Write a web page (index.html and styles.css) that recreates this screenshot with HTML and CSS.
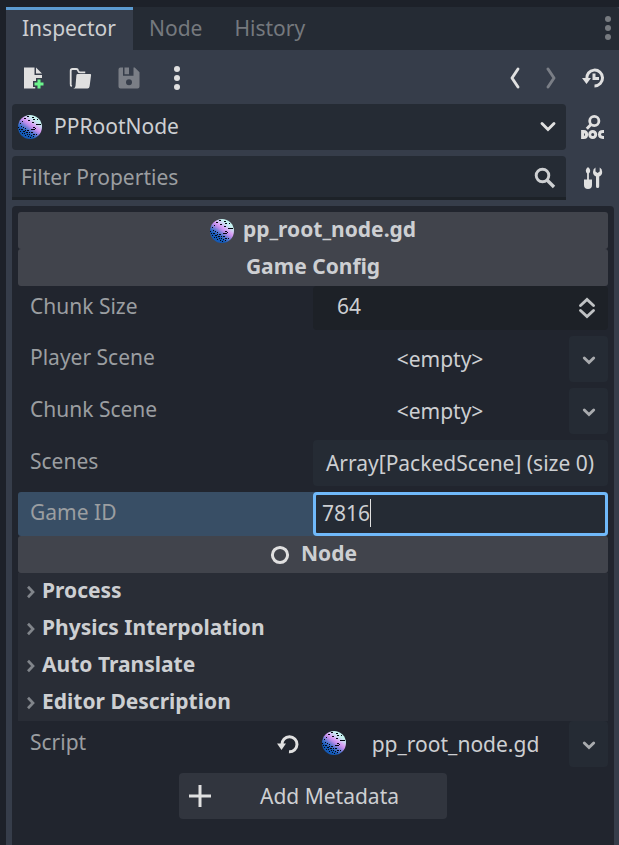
FILE: index.html
```html
<!DOCTYPE html>
<html lang="en">
<head>
<meta charset="utf-8">
<title>Inspector</title>
<link rel="stylesheet" href="styles.css">
</head>
<body>
<svg class="defs" width="0" height="0">
  <defs>
    <linearGradient id="ball" x1="0.8" y1="0.1" x2="0.25" y2="0.85">
      <stop offset="0.14" stop-color="#c4f0ee"/>
      <stop offset="0.3" stop-color="#d2c0f4"/>
      <stop offset="0.4" stop-color="#d89cf4"/>
      <stop offset="0.52" stop-color="#b58ae8"/>
      <stop offset="0.7" stop-color="#4c74cc"/>
      <stop offset="0.86" stop-color="#1459b4"/>
    </linearGradient>
    <symbol id="planet" viewBox="0 0 24 24">
      <circle cx="12" cy="12" r="12" fill="url(#ball)"/>
      <path fill="none" stroke="#05070f" d="M9 1.500h2M6 3.500h2M14 2.500h2M10 5.500h2M15 4.500h2M19 4.500h1M4 6.500h1M14 7.500h2M18 9.500h5M15 12.500h2M13 14.500h4M17 13.500h1M2 8.500h1M0 12.500h1M3 11.500h1M1 14.500h1M5 12.500h1M3 14.500h2M7 13.500h1M9 15.500h2M5 16.500h2M2 16.500h1M7 15.500h1M4 18.500h1M6 18.500h1M8 17.500h2M11 17.500h1M13 17.500h2M7 20.500h1M9 19.500h1M11 19.500h1M13 20.500h1M15 19.500h2M10 21.500h1M12 22.500h1M15 21.500h1M18 19.500h1"/>
    </symbol>
    <symbol id="chev" viewBox="0 0 14 12">
      <path d="M2.300 4 7 8.500 11.700 4" fill="none" stroke="currentColor" stroke-width="2.900" stroke-linecap="round"/>
    </symbol>
    <symbol id="fold" viewBox="0 0 10 14">
      <path d="M2 1.800 7 7 2 12.200" fill="none" stroke="#81858b" stroke-width="2.700"/>
    </symbol>
  </defs>
</svg>
<main class="dock">
  <nav class="tabs">
    <span class="tab active">Inspector</span>
    <span class="tab">Node</span>
    <span class="tab">History</span>
    <svg class="tab-menu" width="8" height="26" fill="#777b80"><circle cx="4" cy="4" r="3"/><circle cx="4" cy="13" r="3"/><circle cx="4" cy="22" r="3"/></svg>
  </nav>
  <div class="toolbar">
    <svg class="ico" viewBox="0 0 16 16"><path fill="#e0e0e0" d="M2 1v14h7.500v-1H8v-4h2V8h4V6H9V1zm8 0v4h4z"/><path fill="#6bf58c" d="M11 9v2H9v2h2v2h2v-2h2v-2h-2V9z"/></svg>
    <svg class="ico folder" viewBox="0 0 16 16"><path d="M2.600 13.500A1.300 1.300 0 0 1 1.800 12V3.200Q1.800 2 3 2h2.500Q6.500 2 6.700 3 7 4.300 8 4.300h3.500" fill="none" stroke="#e0e0e0" stroke-width="1.200"/><path fill="#e0e0e0" d="M6.500 5.300h8.300q.7 0 .6.700l-1 7.500Q14.200 15 13 15H3.500q1.300-.3 1.500-1.700l.6-7.200q.1-.8.900-.8z"/></svg>
    <svg class="ico dim" viewBox="0 0 16 16"><path fill="#e0e0e0" fill-rule="evenodd" d="M2.300 1H4v5.500h7V1h.8L15 4.200v9.500q0 1.300-1.300 1.300H2.300Q1 15 1 13.700V2.300Q1 1 2.300 1zM8 8.800a2 2 0 1 0 0 4 2 2 0 0 0 0-4zM5 1h3v4.500H5z"/></svg>
    <svg class="ico" viewBox="0 0 24 24" fill="#e0e0e0"><circle cx="12" cy="3" r="3"/><circle cx="12" cy="12" r="3"/><circle cx="12" cy="21" r="3"/></svg>
    <span class="spring"></span>
    <svg class="ico back" viewBox="0 0 24 24"><path d="M16 3 10 12l6 9" fill="none" stroke="#e0e0e0" stroke-width="2.900" stroke-linecap="round" stroke-linejoin="round"/></svg>
    <svg class="ico fwd dim" viewBox="0 0 24 24"><path d="m10 3 6 9-6 9" fill="none" stroke="#e0e0e0" stroke-width="2.900" stroke-linecap="round" stroke-linejoin="round"/></svg>
    <svg class="ico" viewBox="0 0 24 24"><path d="M4.800 13A7.900 7.900 0 1 1 12.500 19.900" fill="none" stroke="#e0e0e0" stroke-width="3"/><path fill="#e0e0e0" d="M0 12h9l-4.500 6zM10.500 7.500h3V11h3.500v3h-6.500z"/></svg>
  </div>
  <div class="line object">
    <div class="field select"><svg class="planet"><use href="#planet"/></svg><span>PPRootNode</span><svg class="drop" viewBox="0 0 18 12"><path d="m3 2.500 6 6 6-6" fill="none" stroke="#e0e0e0" stroke-width="2.900" stroke-linecap="round"/></svg></div>
    <svg class="ico side" viewBox="0 0 24 24"><circle cx="13.300" cy="6" r="4.600" fill="none" stroke="#e0e0e0" stroke-width="2.800"/><path d="m10 9.500-4.200 4.200" stroke="#e0e0e0" stroke-width="3"/><g fill="none" stroke="#e0e0e0" stroke-width="3"><path d="M1.600 16.500h1q3 0 3 3t-3 3h-1zM23 16.600h-1q-3.500 0-3.500 2.900t3.500 2.900h1"/><circle cx="11.700" cy="19.500" r="3"/></g></svg>
  </div>
  <div class="line">
    <div class="field search"><span>Filter Properties</span><svg class="ico" viewBox="0 0 24 24"><circle cx="9.500" cy="9.500" r="6.300" fill="none" stroke="#ced0d2" stroke-width="2.900"/><path d="m14 14 7 7" stroke="#ced0d2" stroke-width="3.300"/></svg></div>
    <svg class="ico side" viewBox="0 0 24 24" fill="#e0e0e0"><path d="M7 1q2.200 1.500 2.200 3.500T7.900 7.500v6H11V19a4 4 0 0 1-8 0v-5.500h3.100v-6Q4.800 6.500 4.800 4.500T7 1zM14.500 1.600q-2.500 1.200-2.500 4.300 0 3.200 3 4.600V20.500a1.600 1.600 0 0 0 3.200 0V10.500q3-1.400 3-4.600 0-3.100-2.500-4.300V5.500L16.600 7l-2.100-1.500z"/></svg>
  </div>
  <section class="props">
    <h2 class="head"><svg class="planet"><use href="#planet"/></svg>pp_root_node.gd</h2>
    <h2 class="head">Game Config</h2>
    <div class="row first"><label>Chunk Size</label><div class="value number"><span>64</span><svg width="18" height="22" viewBox="0 0 18 22"><path d="m2.500 8.500 6.500-6 6.500 6M2.500 13.500l6.500 6 6.500-6" fill="none" stroke="#c0c2c4" stroke-width="2.900" stroke-linecap="round"/></svg></div></div>
    <div class="row"><label>Player Scene</label><div class="value resource"><span>&lt;empty&gt;</span><button><svg><use href="#chev"/></svg></button></div></div>
    <div class="row"><label>Chunk Scene</label><div class="value resource"><span>&lt;empty&gt;</span><button><svg><use href="#chev"/></svg></button></div></div>
    <div class="row"><label>Scenes</label><div class="value array">Array[PackedScene] (size 0)</div></div>
    <div class="row chosen"><label>Game ID</label><div class="value edit">7816<i></i></div></div>
    <h2 class="head node"><svg width="20" height="20"><circle cx="10" cy="10" r="7.600" fill="none" stroke="#e0e0e0" stroke-width="3"/></svg>Node</h2>
    <div class="groups">
      <div><svg><use href="#fold"/></svg>Process</div>
      <div><svg><use href="#fold"/></svg>Physics Interpolation</div>
      <div><svg><use href="#fold"/></svg>Auto Translate</div>
      <div><svg><use href="#fold"/></svg>Editor Description</div>
    </div>
    <div class="row script"><label>Script</label><svg class="revert" viewBox="0 0 24 24"><path d="M6 12.500A7.500 7.500 0 1 1 13 19.700" fill="none" stroke="#e0e0e0" stroke-width="3"/><path fill="#e0e0e0" d="M1 11.500h9L5.500 18z"/></svg><div class="value resource"><svg class="planet"><use href="#planet"/></svg><span>pp_root_node.gd</span><button><svg><use href="#chev"/></svg></button></div></div>
    <div class="add"><svg class="ico" viewBox="0 0 24 24"><path d="M12 1v22M1 12h22" stroke="#e0e0e0" stroke-width="3"/></svg><span>Add Metadata</span></div>
  </section>
</main>
</body>
</html>
```
FILE: styles.css
```css
* { box-sizing: border-box; }
body {
  margin: 0;
  height: 845px;
  overflow: hidden;
  padding: 7px 0 0 6px;
  background: #1d2129;
  color: #cdcfd2;
  font: 21px/28px "Noto Sans", sans-serif;
}
svg { display: block; flex: none; }
.defs { position: absolute; }
.dock { height: 838px; background: #363d4a; display: flex; flex-direction: column; }
.tabs { height: 43px; flex: none; display: flex; background: #252b34; border-top-right-radius: 3px; padding-right: 7px; }
.tab { padding: 7px 16px 0; color: #75797e; }
.tab + .tab { padding-right: 16px; }
.tab.active { width: 127px; background: #363d4a; border-top: 3px solid #5c9bd1; padding-top: 4px; color: #cdcfd2; }
.tab-menu { margin: 8px 0 0 auto; }
.toolbar { height: 54px; flex: none; display: flex; align-items: center; gap: 24px; padding: 2px 13px 0 15px; }
.ico { width: 24px; height: 24px; }
.folder { margin: 0 1px 0 -1px; }
.dim { opacity: .4; }
.spring { flex: 1; }
.toolbar .fwd { margin-left: -12px; }
.toolbar .fwd + .ico { margin-left: -4px; }
.line { display: flex; flex: none; height: 44px; margin: 0 14px 0 6px; align-items: center; justify-content: space-between; }
.line.object { height: 46px; margin-bottom: 6px; }
.field { width: 554px; height: 100%; background: #252b34; border-radius: 4px; display: flex; align-items: center; }
.select { padding: 0 9px 0 6px; }
.select span { flex: 1; margin: 0 0 2px 12px; }
.planet { width: 24px; height: 24px; }
.drop { width: 18px; height: 12px; }
.search { padding: 0 9px 0 9px; border-radius: 4px 4px 0 0; border-bottom: 3px solid #1d2228; color: #9b9ea1; justify-content: space-between; }
.search .ico { position: relative; top: 1px; }
.props { width: 602px; margin: 6px 0 0 6px; height: 639px; flex: none; padding: 6px; background: #21252e; border-radius: 4px 4px 0 0; }
.head { height: 37px; margin: 0; font-size: 21px; line-height: 28px; font-weight: 700; display: flex; align-items: center; justify-content: center; gap: 9px; background: #41444c; border-radius: 3px; padding-bottom: 4px; }
.head.node { gap: 11px; padding-left: 1px; }
.head .planet, .head.node svg { position: relative; top: 2px; }
.row { height: 46px; margin-bottom: 6px; display: flex; color: #9b9ea1; }
.row label { width: 295px; padding: 7px 0 0 12px; }
.row.first { height: 44px; }
.row.first label, .row.chosen label { padding-top: 6px; }
.value { flex: 1; color: #cdcfd2; display: flex; align-items: center; border-radius: 4px; }
.number { background: #1d2127; padding: 0 12px 4px 24px; justify-content: space-between; }
.number svg { position: relative; top: 2px; }
.resource span { flex: 1; text-align: center; padding-right: 2px; }
.script .resource span { padding-right: 4px; }
button { border: 0; padding: 2px 0 0; width: 39px; height: 46px; background: #252b34; border-radius: 4px; color: #a9abae; display: grid; place-items: center; }
button svg { width: 14px; height: 12px; }
.array { background: #252b34; justify-content: center; white-space: nowrap; padding-right: 1px; }
.row.chosen { height: 44px; margin: 0; background: #384e65; border-radius: 3px; }
.edit { background: #252b34; border: 3px solid #70b9fa; padding: 0 0 2px 6px; }
.edit i { width: 1px; height: 28px; background: #e0e0e0; }
.groups { background: #292d36; font-weight: 700; }
.groups div { height: 37px; display: flex; align-items: center; gap: 6px; padding: 0 0 4px 8px; }
.groups svg { width: 10px; height: 14px; position: relative; top: 2px; }
.script { position: relative; }
.script .revert { position: absolute; left: 258px; top: 11px; width: 24px; height: 24px; }
.script .resource .planet { margin: 0 0 2px 9px; }
.add { width: 268px; height: 46px; margin: 0 auto; background: #31353e; border-radius: 4px; display: flex; align-items: center; padding: 0 48px 0 9px; justify-content: space-between; }
```
